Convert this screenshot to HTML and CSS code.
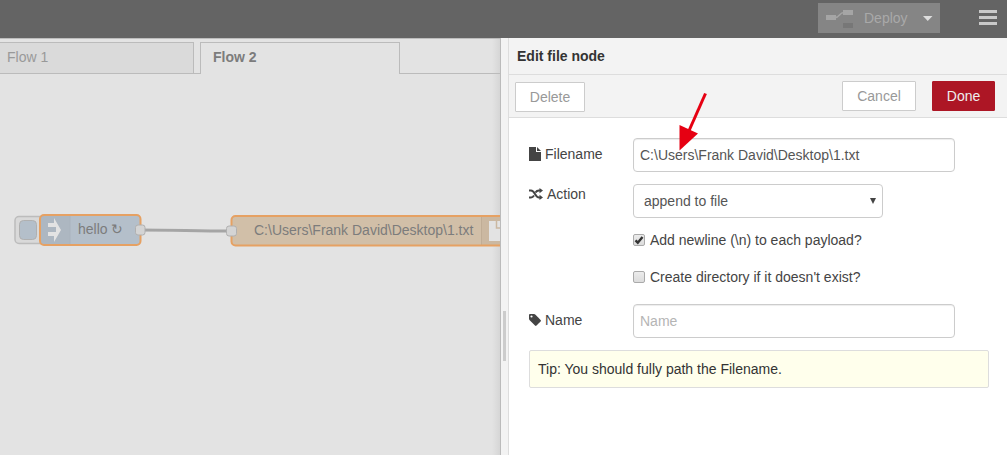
FILE: index.html
```html
<!DOCTYPE html>
<html lang="en">
<head>
<meta charset="utf-8">
<title>Flow editor</title>
<link rel="stylesheet" href="styles.css">
</head>
<body>
<header class="header">
  <button class="deploy">
    <svg class="deploy-icon" width="28" height="19" viewBox="0 0 28 19"><path d="M9 7.500C14 7.500 13 2.500 18 2.500" fill="none" stroke="#a5a5a5" stroke-width="1.5"/><path fill="#a5a5a5" d="M0 5h10v5H0zM17 0h10v5H17z"/><path fill="#777" d="M17 13h10v5H17z"/></svg>
    <span class="deploy-label">Deploy</span>
    <svg class="caret" width="10" height="5" viewBox="0 0 10 5"><path d="M0 0h9.500L4.750 5z" fill="#ddd"/></svg>
  </button>
  <svg class="menu" width="18" height="15" viewBox="0 0 18 15"><path d="M0 0h18v3H0zM0 6h18v3H0zM0 12h18v3H0z" fill="#c9c9c9"/></svg>
</header>
<main class="main">
  <section class="workspace">
    <nav class="tabs">
      <div class="tab">Flow 1</div>
      <div class="tab active">Flow 2</div>
      <div class="tab-rest"></div>
    </nav>
    <svg class="canvas" width="500" height="381" viewBox="0 74 500 381">
      <path d="M140 230C176 230 195 231 231 231" fill="none" stroke="#a5a5a5" stroke-width="3"/>
      <rect x="15" y="216.500" width="32" height="27" rx="4" fill="#d9d9d9" stroke="#bcbcbc" stroke-width="1.500"/>
      <rect x="19.500" y="220.500" width="17" height="19" rx="4" fill="#b4bfca" stroke="#b0b0b0"/>
      <rect x="40" y="215" width="100.500" height="30" rx="4" fill="#b4bfca"/>
      <path d="M41 216h29v28H41z" fill="#adb7c1"/>
      <path d="M70 216v28" stroke="#a9b3bd"/>
      <path d="M48 223h6v-5l7 12-7 12v-6h-6v-4h8v-5h-8z" fill="#e3e3e3"/>
      <rect x="40" y="215" width="100.500" height="30" rx="4" fill="none" stroke="#e6a163" stroke-width="2"/>
      <text x="78" y="234" class="node-label">hello ↻</text>
      <rect x="231.500" y="216" width="290" height="29.500" rx="4" fill="#d1bfa8"/>
      <path d="M482 217h20v28h-20z" fill="#cbb8a1"/>
      <path d="M481.500 217v28" stroke="#c0ad96"/>
      <path d="M489 221h11v20h-11z" fill="#e3e3e3"/>
      <path d="M496.500 221v7h4" fill="none" stroke="#cbb8a1" stroke-width="1.500"/>
      <rect x="231.500" y="216" width="290" height="29.500" rx="4" fill="none" stroke="#e6a163" stroke-width="2"/>
      <text x="254" y="235" class="node-label">C:\Users\Frank David\Desktop\1.txt</text>
      <rect x="135.500" y="225" width="9.500" height="10" rx="2.500" fill="#d4d4d4" stroke="#b0b0b0"/>
      <rect x="226.500" y="226" width="10" height="10" rx="2.500" fill="#d4d4d4" stroke="#b0b0b0"/>
    </svg>
  </section>
  <div class="separator"><div class="grip"></div></div>
  <section class="panel">
    <h1 class="panel-title">Edit file node</h1>
    <div class="toolbar">
      <button class="btn delete">Delete</button>
      <button class="btn cancel">Cancel</button>
      <button class="btn done">Done</button>
    </div>
    <form class="form">
      <div class="row">
        <label class="label" for="filename"><svg width="12" height="14" viewBox="0 0 12 14"><path d="M0 0h7v5h5v9H0zM8 0l4 4H8z" fill="#444"/></svg><span>Filename</span></label>
        <input class="field" id="filename" type="text" value="C:\Users\Frank David\Desktop\1.txt">
      </div>
      <div class="row">
        <label class="label wide-icon"><svg width="14" height="12" viewBox="0 0 14 12"><path d="M0 2.500h2C6 2.500 6 9.500 10 9.500h1M0 9.500h2c1.500 0 2.400-1 3-2M6.500 4.500C7.300 3.200 8.300 2.500 10 2.500h1" fill="none" stroke="#444" stroke-width="2"/><path d="M10.500 0L14 2.600l-3.500 2.700zM10.500 6.700L14 9.400 10.500 12z" fill="#444"/></svg><span>Action</span></label>
        <div class="select"><span>append to file</span><svg width="6" height="6" viewBox="0 0 6 6"><path d="M0 0h6L3 6z" fill="#444"/></svg></div>
      </div>
      <div class="check-row"><span class="box"><svg width="10" height="10" viewBox="0 0 10 10"><path d="M1.500 5.300l2.300 2.400L8.500 2" fill="none" stroke="#333" stroke-width="2.400"/></svg></span><span>Add newline (\n) to each payload?</span></div>
      <div class="check-row second"><span class="box"></span><span>Create directory if it doesn't exist?</span></div>
      <div class="row">
        <label class="label" for="name"><svg width="12" height="12" viewBox="0 0 12 12"><path fill-rule="evenodd" d="M0 1q0-1 1-1h4q.8 0 1.500.7L11.600 6q.8.800 0 1.500L7.500 11.600q-.7.700-1.500 0L.700 6.300Q0 5.600 0 4.800zM2.500 1.400a1.100 1.100 0 1 0 0 2.200 1.100 1.100 0 0 0 0-2.200z" fill="#444"/></svg><span>Name</span></label>
        <input class="field" id="name" type="text" placeholder="Name">
      </div>
      <div class="tip">Tip: You should fully path the Filename.</div>
    </form>
  </section>
</main>
<svg class="pointer" width="30" height="60" viewBox="678 92 30 60"><path d="M705.500 93.500L688 133" stroke="#e60012" stroke-width="3"/><path d="M679.500 150.500V125l18.500 8.500z" fill="#e60012"/></svg>
</body>
</html>
```
FILE: styles.css
```css
* { box-sizing: border-box; }
body {
  margin: 0;
  width: 1007px;
  height: 455px;
  overflow: hidden;
  display: flex;
  flex-direction: column;
  font: 14px/20px "Liberation Sans", Arial, sans-serif;
  color: #333;
  background: #fff;
}
svg { display: block; flex: none; }
button, input { font: inherit; margin: 0; }
.header {
  height: 38px;
  flex: none;
  background: #646464;
  display: flex;
  justify-content: flex-end;
  align-items: flex-start;
  padding: 3px 10px 0 0;
}
.deploy {
  width: 122px;
  height: 30px;
  border: 0;
  padding: 0 0 0 8px;
  background: #858585;
  display: flex;
  align-items: center;
  color: #a9a9a9;
}
.deploy-icon { margin-top: 2px; }
.deploy-label { font-size: 14px; margin-left: 10px; width: 44px; text-align: left; }
.caret { margin-left: 15px; }
.menu { margin: 7px 0 0 39px; }
.main { flex: 1; display: flex; min-height: 0; }
.workspace {
  width: 500px;
  flex: none;
  background: linear-gradient(to right, transparent 492px, rgba(0, 0, 0, .06)), #e3e3e3;
  border-top: 1px solid #bdbdbd;
}
.tabs { height: 35px; padding-top: 3px; display: flex; }
.tab {
  width: 194px;
  border: 1px solid #bbb;
  border-left: 0;
  background: #dadada;
  color: #999;
  padding: 4px 7px;
}
.tab.active {
  width: 200px;
  margin-left: 6px;
  background: none;
  border-left: 1px solid #bbb;
  border-bottom: 0;
  padding-left: 12px;
  font-weight: bold;
  color: #7c7c7c;
  position: relative;
}
.tab.active::before {
  content: "";
  position: absolute;
  left: -7px;
  bottom: 0;
  width: 7px;
  border-bottom: 1px solid #bbb;
}
.tab-rest { flex: 1; border-bottom: 1px solid #bbb; }
.node-label { font-size: 14px; fill: #7c7c7c; }
.separator {
  width: 9px;
  flex: none;
  background: #f3f3f3;
  border-left: 1px solid #bbb;
  border-right: 1px solid #ddd;
  padding: 273px 0 0 2px;
}
.grip { width: 3px; height: 50px; background: #ccc; }
.panel { flex: 1; background: #fff; }
.panel-title {
  margin: 0;
  height: 37px;
  padding: 8px;
  font-size: 14px;
  line-height: 20px;
  background: #f3f3f3;
  border-bottom: 1px solid #ddd;
}
.toolbar {
  height: 43px;
  padding: 6px 12px 0 6px;
  display: flex;
  background: #f3f3f3;
  border-bottom: 1px solid #ddd;
}
.btn {
  height: 30px;
  padding: 0;
  border: 1px solid #ccc;
  border-radius: 1px;
  background: #fff;
  color: #999;
}
.delete { width: 70px; margin-top: 1px; }
.cancel { width: 74px; margin-left: auto; }
.done { width: 63px; margin-left: 16px; background: #ad1625; border-color: #ad1625; color: #eee; }
.form { padding: 20px 18px 0 20px; }
.row { display: flex; align-items: flex-start; margin-bottom: 12px; }
.label { width: 104px; display: flex; align-items: center; gap: 4px; padding-top: 6px; color: #444; }
.wide-icon { padding-top: 0; }
.field, .select {
  height: 34px;
  border: 1px solid #ccc;
  border-radius: 4px;
  background: #fff;
  color: #555;
}
.field { width: 322px; padding: 0 6px; box-shadow: inset 0 1px 1px rgba(0, 0, 0, .075); outline: 0; }
.field::placeholder { color: #b5b5b5; opacity: 1; }
.select { width: 250px; padding: 0 6px 0 10px; display: flex; align-items: center; justify-content: space-between; }
.check-row { display: flex; align-items: center; gap: 5px; height: 20px; margin-left: 104px; color: #444; }
.second { margin: 17px 0 17px 104px; }
.box {
  width: 12px;
  height: 12px;
  border: 1px solid #aaa;
  border-radius: 2px;
  background: linear-gradient(#ececec, #dcdcdc);
}
.tip { height: 38px; padding: 8px; background: #ffffec; border: 1px solid #ddd; border-radius: 2px; }
.pointer { position: absolute; left: 678px; top: 92px; }
```
